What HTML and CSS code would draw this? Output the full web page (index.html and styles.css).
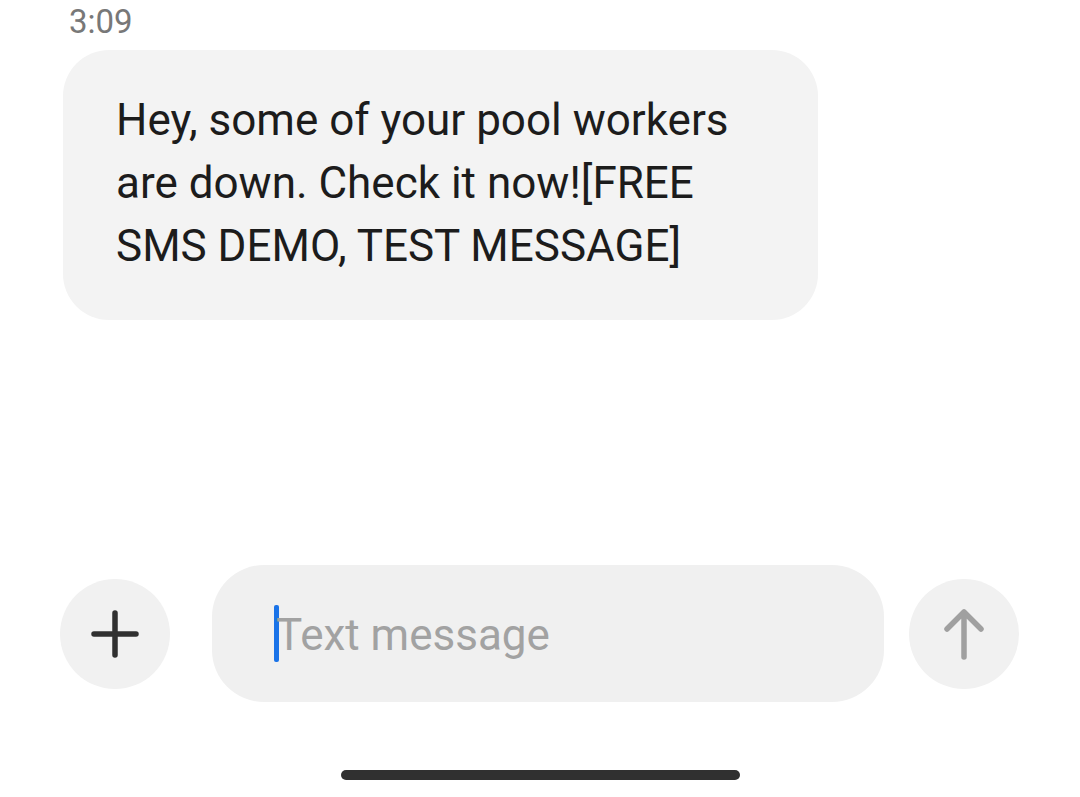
FILE: index.html
```html
<!DOCTYPE html>
<html>
<head>
<meta charset="utf-8">
<link rel="stylesheet" href="styles.css">
</head>
<body>
<div class="screen">
  <div class="thread">
    <div class="time">3:09</div>
    <div class="bubble"><div class="bubble-text">Hey, some of your pool workers are down. Check it now![FREE SMS DEMO, TEST MESSAGE]</div></div>
  </div>
  <div class="composer">
    <div class="round-btn plus">
      <svg width="52" height="52" viewBox="0 0 52 52"><path d="M26 5 V47 M5 26 H47" stroke="#303030" stroke-width="5.5" stroke-linecap="round" fill="none"/></svg>
    </div>
    <div class="input">
      <span class="caret"></span><span class="placeholder">Text message</span>
    </div>
    <div class="round-btn send">
      <svg width="52" height="56" viewBox="0 0 52 56"><path d="M26 51 V6 M9 23 L26 6 L43 23" stroke="#a0a0a0" stroke-width="5.5" stroke-linecap="round" stroke-linejoin="round" fill="none"/></svg>
    </div>
  </div>
  <div class="home"><div class="home-bar"></div></div>
</div>
</body>
</html>
```
FILE: styles.css
```css
html, body {
  margin: 0;
  padding: 0;
  background: #ffffff;
}
.screen {
  width: 1080px;
  height: 797px;
  display: flex;
  flex-direction: column;
  font-family: Roboto, "Noto Sans", sans-serif;
  overflow: hidden;
}
.thread {
  flex: 1;
}
.time {
  color: #787878;
  font-size: 33px;
  line-height: 40px;
  padding-left: 69px;
  height: 40px;
  padding-top: 2px;
  margin-bottom: 8px;
}
.bubble {
  margin-left: 63px;
  width: 755px;
  height: 270px;
  box-sizing: border-box;
  padding: 39px 0 0 53px;
  background: #f3f3f3;
  border-radius: 46px;
  color: #1c1c1c;
  font-size: 44px;
  line-height: 63px;
}
.bubble-text {
  width: 640px;
}
.composer {
  display: flex;
  align-items: center;
  padding-left: 60px;
  height: 137px;
}
.round-btn {
  width: 110px;
  height: 110px;
  border-radius: 50%;
  background: #f1f1f1;
  display: flex;
  align-items: center;
  justify-content: center;
  flex: none;
}
.input {
  margin-left: 42px;
  margin-right: 25px;
  width: 672px;
  height: 137px;
  border-radius: 52px;
  background: #f0f0f0;
  display: flex;
  align-items: center;
  padding-left: 62px;
  box-sizing: border-box;
}
.caret {
  width: 5px;
  height: 57px;
  border-radius: 2px;
  background: #1a73e8;
  margin-right: -3px;
}
.placeholder {
  color: #a2a2a2;
  font-size: 44px;
  line-height: 57px;
  padding-top: 4px;
}
.home {
  height: 95px;
  display: flex;
  justify-content: center;
  padding-top: 68px;
  box-sizing: border-box;
}
.home-bar {
  width: 399px;
  height: 10px;
  border-radius: 5px;
  background: #303030;
}
```
